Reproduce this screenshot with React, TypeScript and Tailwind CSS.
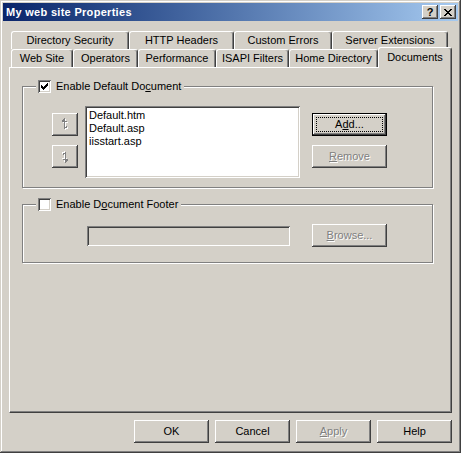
import React from 'react';

// --- Win2000 bevels ---
const raised =
  'bg-[#D4D0C8] shadow-[inset_-1px_-1px_0_#404040,inset_1px_1px_0_#ffffff,inset_-2px_-2px_0_#808080,inset_2px_2px_0_#D4D0C8]';
const sunken =
  'shadow-[inset_1px_1px_0_#808080,inset_-1px_-1px_0_#ffffff,inset_2px_2px_0_#404040,inset_-2px_-2px_0_#D4D0C8]';
const disabledText = 'text-[#808080] [text-shadow:1px_1px_0_#ffffff]';

function Button({
  children,
  w = 75,
  isDefault = false,
  disabled = false,
}: {
  children: React.ReactNode;
  w?: number;
  isDefault?: boolean;
  disabled?: boolean;
}) {
  if (isDefault) {
    return (
      <div className="relative w-[75px] h-[23px] border border-black bg-[#D4D0C8] flex items-center justify-center shadow-[inset_-1px_-1px_0_#404040,inset_1px_1px_0_#ffffff,inset_-2px_-2px_0_#808080]">
        <span className="absolute inset-[3px] border border-dotted border-black" />
        <span className="relative">{children}</span>
      </div>
    );
  }
  return (
    <div
      className={`${raised} h-[23px] flex items-center justify-center ${disabled ? disabledText : 'text-black'}`}
      style={{ width: w }}
    >
      {children}
    </div>
  );
}

// 7x7 check glyph, row by row
const checkRows = ['......#', '.....##', '#...###', '##.###.', '#####..', '.###...', '..#....'];

function CheckBox({ checked }: { checked: boolean }) {
  return (
    <div className={`w-[13px] h-[13px] bg-white ${sunken} flex items-center justify-center`}>
      {checked && (
        <svg width="7" height="7" viewBox="0 0 7 7" shapeRendering="crispEdges">
          {checkRows.flatMap((row, y) =>
            row.split('').map((c, x) => (c === '#' ? <rect key={`${x}-${y}`} x={x} y={y} width="1" height="1" fill="#000" /> : null))
          )}
        </svg>
      )}
    </div>
  );
}

function GroupBox({
  label,
  checked,
  children,
  className = '',
}: {
  label: React.ReactNode;
  checked: boolean;
  children: React.ReactNode;
  className?: string;
}) {
  return (
    <div
      className={`relative border border-[#808080] shadow-[inset_1px_1px_0_#ffffff,1px_1px_0_#ffffff] ${className}`}
    >
      <div className="absolute left-[13px] top-[-8px] h-[15px] px-[2px] bg-[#D4D0C8] flex items-center gap-[5px]">
        <CheckBox checked={checked} />
        <span className="pr-[1px]">{label}</span>
      </div>
      {children}
    </div>
  );
}

function ArrowGlyph({ fill }: { fill: string }) {
  return (
    <g fill={fill}>
      <rect x="3" y="0" width="1" height="11" />
      <rect x="2" y="1" width="1" height="3" />
      <rect x="1" y="2" width="1" height="2" />
      <rect x="4" y="3" width="2" height="1" />
      <rect x="4" y="9" width="2" height="1" />
      <rect x="5" y="8" width="1" height="1" />
    </g>
  );
}

function ArrowButton({ down = false }: { down?: boolean }) {
  return (
    <div className={`${raised} w-[26px] h-[23px] flex items-center justify-center`}>
      <svg width="8" height="13" viewBox="0 0 8 13" shapeRendering="crispEdges" className={down ? 'rotate-180' : ''}>
        <g transform="translate(1 1)">
          <ArrowGlyph fill="#ffffff" />
        </g>
        <ArrowGlyph fill="#808080" />
      </svg>
    </div>
  );
}

const tab =
  'h-[18px] flex items-center justify-center border-t border-l border-white border-r border-r-[#404040] rounded-t-[3px] shadow-[inset_-1px_0_0_#808080] bg-[#D4D0C8]';

const backRow: [string, number][] = [
  ['Directory Security', 118],
  ['HTTP Headers', 105],
  ['Custom Errors', 98],
  ['Server Extensions', 116],
];
const frontRow: [string, number][] = [
  ['Web Site', 62],
  ['Operators', 65],
  ['Performance', 78],
  ['ISAPI Filters', 73],
  ['Home Directory', 89],
];

export default function App() {
  return (
    <div
      className="w-[461px] h-[453px] bg-[#D4D0C8] p-[3px] flex flex-col text-[11px] leading-[13px] text-black shadow-[inset_-1px_-1px_0_#404040,inset_1px_1px_0_#D4D0C8,inset_-2px_-2px_0_#808080,inset_2px_2px_0_#ffffff] select-none"
      style={{ fontFamily: '"Liberation Sans", Arial, sans-serif' }}
    >
      {/* title bar */}
      <div className="h-[18px] flex items-center bg-gradient-to-r from-[#0A246A] to-[#A6CAF0] pl-[3px] pr-[2px]">
        <span className="flex-1 text-white font-bold text-[11px] tracking-[0.3px]">My web site Properties</span>
        <div className="flex gap-[2px]">
          <div className={`${raised} w-[16px] h-[14px] flex items-center justify-center font-bold text-[11px] leading-none pt-[1px]`}>
            ?
          </div>
          <div className={`${raised} w-[16px] h-[14px] flex items-center justify-center`}>
            <svg width="8" height="7" viewBox="0 0 8 7" shapeRendering="crispEdges">
              <path d="M0 0h2v1h1v1h2v-1h1v-1h2v1h-1v1h-1v1h-1v1h1v1h1v1h1v1h-2v-1h-1v-1h-2v1h-1v1h-2v-1h1v-1h1v-1h1v-1h-1v-1h-1v-1h-1z" fill="#000" />
            </svg>
          </div>
        </div>
      </div>

      {/* body */}
      <div className="flex-1 flex flex-col px-[6px] pt-[10px] pb-[6px]">
        {/* tabs */}
        <div className="flex pl-[2px]">
          {backRow.map(([t, w]) => (
            <div key={t} className={tab} style={{ width: w }}>
              {t}
            </div>
          ))}
        </div>
        <div className="flex pl-[2px] h-[18px]">
          {frontRow.map(([t, w]) => (
            <div key={t} className={tab} style={{ width: w }}>
              {t}
            </div>
          ))}
          <div className="relative z-10 w-[74px] h-[21px] -mt-[2px] flex items-start justify-center pt-[3px] border-t border-l border-white border-r border-r-[#404040] rounded-t-[3px] shadow-[inset_-1px_0_0_#808080] bg-[#D4D0C8]">
            Documents
          </div>
        </div>

        {/* tab panel */}
        <div className="h-[346px] border-t border-l border-white border-r border-b border-r-[#404040] border-b-[#404040] shadow-[inset_-1px_-1px_0_#808080] pl-[12px] pt-[18px]">
          <GroupBox
            checked
            className="w-[411px] h-[102px] pt-[19px] pl-[29px]"
            label={
              <>
                Enable Default Do<span className="underline underline-offset-[1px]">c</span>ument
              </>
            }
          >
            <div className="flex items-start">
              <div className="flex flex-col gap-[9px] mt-[7px]">
                <ArrowButton />
                <ArrowButton down />
              </div>
              <div className={`ml-[7px] w-[215px] h-[72px] bg-white ${sunken} pl-[4px] pt-[3px] flex flex-col`}>
                <span>Default.htm</span>
                <span>Default.asp</span>
                <span>iisstart.asp</span>
              </div>
              <div className="ml-[12px] mt-[7px] flex flex-col gap-[9px]">
                <Button isDefault>
                  A<span className="underline underline-offset-[1px]">d</span>d...
                </Button>
                <Button disabled>
                  <span className="underline underline-offset-[1px]">R</span>emove
                </Button>
              </div>
            </div>
          </GroupBox>

          <GroupBox
            checked={false}
            className="w-[411px] h-[59px] mt-[16px] pt-[19px] pl-[64px]"
            label={
              <>
                Enable D<span className="underline underline-offset-[1px]">o</span>cument Footer
              </>
            }
          >
            <div className="flex items-start">
              <div className={`mt-[2px] w-[203px] h-[20px] bg-[#D4D0C8] ${sunken}`} />
              <div className="ml-[22px]">
                <Button disabled>
                  <span className="underline underline-offset-[1px]">B</span>rowse...
                </Button>
              </div>
            </div>
          </GroupBox>
        </div>

        {/* dialog buttons */}
        <div className="flex justify-end gap-[6px] mt-[7px]">
          <Button>OK</Button>
          <Button>Cancel</Button>
          <Button disabled>
            <span className="underline underline-offset-[1px]">A</span>pply
          </Button>
          <Button>Help</Button>
        </div>
      </div>
    </div>
  );
}
